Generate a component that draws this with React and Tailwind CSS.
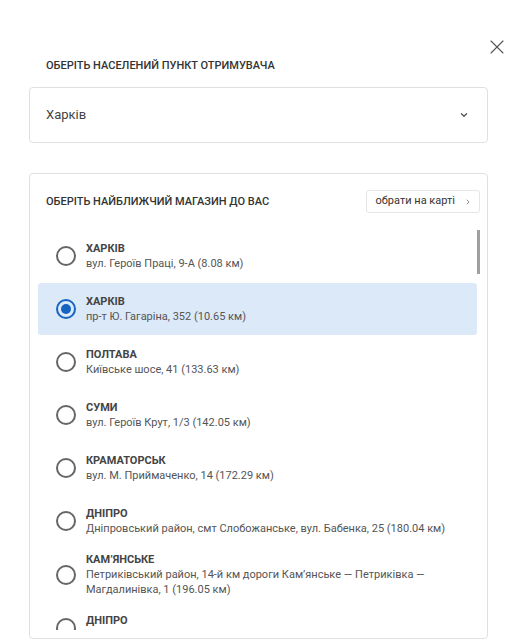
import { X, ChevronDown, ChevronRight } from 'lucide-react';

const stores = [
  { city: 'Харків', address: 'вул. Героїв Праці, 9-А (8.08 км)' },
  { city: 'Харків', address: 'пр-т Ю. Гагаріна, 352 (10.65 км)', selected: true },
  { city: 'Полтава', address: 'Київське шосе, 41 (133.63 км)' },
  { city: 'Суми', address: 'вул. Героїв Крут, 1/3 (142.05 км)' },
  { city: 'Краматорськ', address: 'вул. М. Приймаченко, 14 (172.29 км)' },
  { city: 'Дніпро', address: 'Дніпровський район, смт Слобожанське, вул. Бабенка, 25 (180.04 км)' },
  { city: 'Кам’янське', address: 'Петриківський район, 14-й км дороги Кам’янське — Петриківка — Магдалинівка, 1 (196.05 км)' },
  { city: 'Дніпро', address: 'вул. Нижньодніпровська, 2 (210.11 км)' },
];

function Radio({ checked }) {
  return (
    <span
      className={`shrink-0 w-[20px] h-[20px] rounded-full border-2 flex items-center justify-center ${
        checked ? 'border-[#1565c0]' : 'border-[#666]'
      }`}
    >
      {checked && <span className="w-[10px] h-[10px] rounded-full bg-[#1565c0]" />}
    </span>
  );
}

export default function App() {
  return (
    <div className="relative w-[510px] h-[644px] overflow-hidden bg-white pl-[29px] pr-[22px] pt-[59px] font-['Roboto',sans-serif] text-[#333]">
      {/* close */}
      <button className="absolute top-[35px] right-[1px] text-[#555]">
        <X className="w-[24px] h-[24px]" strokeWidth={1.1} />
      </button>

      <div className="pl-[17px] text-[11px] leading-[14px] font-medium uppercase text-[#333]">
        Оберіть населений пункт отримувача
      </div>

      {/* city select */}
      <div className="mt-[14px] h-[56px] border border-[#e0e0e0] rounded-[4px] flex items-center justify-between pl-[16px] pr-[18px]">
        <span className="text-[13px] text-[#444]">Харків</span>
        <ChevronDown className="w-[10px] h-[10px] text-[#555]" strokeWidth={3} />
      </div>

      {/* stores card */}
      <div className="mt-[30px] h-[466px] border border-[#e0e0e0] rounded-[4px] flex flex-col pb-[8px]">
        <div className="flex items-center justify-between pl-[16px] pr-[7px] pt-[16px] pb-[17px]">
          <span className="text-[11px] leading-[14px] font-medium uppercase text-[#333]">
            Оберіть найближчий магазин до вас
          </span>
          <button className="h-[23px] border border-[#e6e6e6] rounded-[3px] flex items-center pl-[9px] pr-[7px] gap-[9px] text-[11px] text-[#333]">
            обрати на карті
            <ChevronRight className="w-[8px] h-[8px] text-[#777]" strokeWidth={2.5} />
          </button>
        </div>

        <div className="flex-1 min-h-0 flex pl-[8px] pr-[7px]">
          <div className="flex-1 overflow-hidden flex flex-col gap-[1px]">
            {stores.map((s, i) => (
              <div
                key={i}
                className={`shrink-0 min-h-[52px] py-[4px] flex items-center gap-[10px] pl-[18px] pr-[8px] rounded-[3px] ${
                  s.selected ? 'bg-[#dce9f8]' : ''
                }`}
              >
                <Radio checked={s.selected} />
                <div className="flex flex-col">
                  <span className="text-[11px] leading-[15px] font-bold uppercase text-[#444]">{s.city}</span>
                  <span className="text-[11px] leading-[15px] text-[#555]">{s.address}</span>
                </div>
              </div>
            ))}
          </div>
          <div className="w-[3px] shrink-0">
            <div className="h-[44px] bg-[#a0a0a0]" />
          </div>
        </div>
      </div>
    </div>
  );
}
